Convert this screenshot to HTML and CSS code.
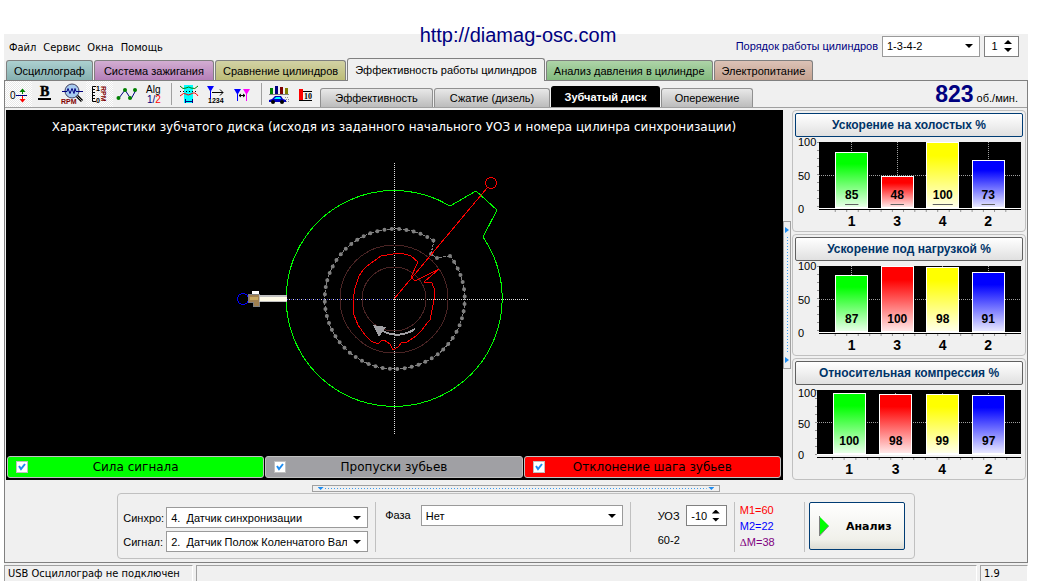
FILE: index.html
```html
<!DOCTYPE html>
<html lang="ru">
<head>
    <meta charset="UTF-8">
    <meta name="viewport" content="width=device-width, initial-scale=1.0">
    <title>Diamag</title>
    <link rel="stylesheet" href="styles.css">
</head>
<body>
    <div class="banner"><a href="#">http://diamag-osc.com</a></div>

    <div class="window">
        <header class="topbar">
            <nav class="menu">
                <a href="#">Файл</a>
                <a href="#">Сервис</a>
                <a href="#">Окна</a>
                <a href="#">Помощь</a>
            </nav>
            <div class="order">
                <label for="order">Порядок работы цилиндров</label>
                <select id="order" class="select order-select">
                    <option>1-3-4-2</option>
                </select>
                <div class="spinner">
                    <input type="text" value="1" aria-label="Цилиндр">
                    <div class="arrows">
                        <button type="button" class="up" aria-label="Больше"></button>
                        <button type="button" class="down" aria-label="Меньше"></button>
                    </div>
                </div>
            </div>
        </header>

        <div class="tabs">
            <button type="button" class="tab teal">Осциллограф</button>
            <button type="button" class="tab violet">Система зажигания</button>
            <button type="button" class="tab olive">Сравнение цилиндров</button>
            <button type="button" class="tab current">Эффективность работы цилиндров</button>
            <button type="button" class="tab green">Анализ давления в цилиндре</button>
            <button type="button" class="tab brown">Электропитание</button>
        </div>

        <div class="page">
            <div class="toolbar">
                <button type="button" class="tool pressed" aria-label="Ноль">
                    <svg viewBox="0 0 26 24">
                        <text x="5" y="17" font-size="10">0</text>
                        <path d="M11 13.500h11" stroke="#000080"/>
                        <path d="M17.500 12V9" stroke="#008000"/>
                        <path d="M14.500 10l3-3.500 3 3.500z" fill="#008000"/>
                        <path d="M17.500 14v3" stroke="#f00"/>
                        <path d="M14.500 17l3 3.500 3-3.500z" fill="#f00"/>
                    </svg>
                </button>
                <button type="button" class="tool" aria-label="Жирный">
                    <svg viewBox="0 0 26 24">
                        <text x="8" y="14" class="serif" font-size="14" stroke="#000" stroke-width=".500">B</text>
                        <path d="M6 17h13" stroke="#000" stroke-width="2"/>
                    </svg>
                </button>
                <button type="button" class="tool" aria-label="Обороты">
                    <svg viewBox="0 0 26 24">
                        <path d="M17 13l6 6" stroke="#000" stroke-width="3"/>
                        <path d="M18 14l5 5" stroke="#a0a0a0"/>
                        <circle cx="13" cy="9" r="7" fill="#a6caf0" stroke="#404060"/>
                        <path d="M3 9.500h5l1-3 2 5 2-5 2 5 1-5 1 3h7" fill="none" stroke="#000080"/>
                        <text x="2" y="22" class="bold" font-size="7" fill="#800000">RPM</text>
                    </svg>
                </button>
                <button type="button" class="tool pressed" aria-label="Шкала оборотов">
                    <svg viewBox="0 0 26 24">
                        <path d="M10 4.500H6.500v15H10M7 7.500h2M7 10.500h2M7 13.500h2M7 16.500h2" fill="none" stroke="#000"/>
                        <text x="10" y="9" class="bold" font-size="7">1</text>
                        <text x="10" y="21" class="bold" font-size="7">0</text>
                        <text transform="translate(15 4) rotate(90)" x="0" y="0" class="bold" font-size="7" fill="#800000">RPM</text>
                    </svg>
                </button>
                <button type="button" class="tool" aria-label="График">
                    <svg viewBox="0 0 26 24">
                        <path d="M6 16l6-8 6 9 5-9" fill="none" stroke="#000080"/>
                        <g fill="#008000">
                            <circle cx="5.500" cy="16" r="2"/><circle cx="12" cy="8" r="2"/>
                            <circle cx="17" cy="16" r="2"/><circle cx="22" cy="8" r="2"/>
                        </g>
                    </svg>
                </button>
                <button type="button" class="tool" aria-label="Алгоритм">
                    <svg viewBox="0 0 26 24">
                        <text x="6" y="11" font-size="10">Alg</text>
                        <text x="7" y="21" font-size="10" fill="#000080">1/<tspan fill="#f00">2</tspan></text>
                    </svg>
                </button>
                <span class="divider"></span>
                <button type="button" class="tool" aria-label="Область">
                    <svg viewBox="0 0 26 24">
                        <path d="M8 3h9v18H8z" fill="#0ff"/>
                        <path d="M4 4q3 4 6 2t5 0q4 2 7-2" fill="none" stroke="#008000"/>
                        <path d="M4 9.500h18" stroke="#000" stroke-dasharray="1 2"/>
                        <path d="M4 14q4-4 6-2t5 0q4-3 7 2" fill="none" stroke="#f00"/>
                        <path d="M9 19.500h8M9.500 17v4M16.500 17v4" stroke="#000080"/>
                    </svg>
                </button>
                <button type="button" class="tool" aria-label="Порядок">
                    <svg viewBox="0 0 26 24">
                        <path d="M4 4h7l-3 5v8H7V9z" fill="#00f"/>
                        <path d="M9 10.500h11M17 7.500l3 3-3 3" fill="none" stroke="#000"/>
                        <text x="5" y="21" class="bold" font-size="7">1234</text>
                    </svg>
                </button>
                <button type="button" class="tool" aria-label="Метки">
                    <svg viewBox="0 0 26 24">
                        <path d="M4 7h7L8 12v7H7v-7z" fill="#00f"/>
                        <path d="M13 7h7l-3 5v7h-1v-7z" fill="#f0f"/>
                        <path d="M9 13.500h6M11 12l-2 1.500 2 1.500M13 12l2 1.500-2 1.500" fill="none" stroke="#000"/>
                    </svg>
                </button>
                <span class="divider"></span>
                <button type="button" class="tool" aria-label="Автомобиль">
                    <svg viewBox="0 0 26 24">
                        <path d="M4 6h3v6H4z" fill="#008000"/>
                        <path d="M9 4h3v8H9z" fill="#000080"/>
                        <path d="M14 5h3v7h-3z" fill="#800000"/>
                        <path d="M19 6h3v6h-3z" fill="#808000"/>
                        <path d="M3 12.500h20" stroke="#808080"/>
                        <path d="M3 18l3-1 3-3h6l2 3 3 1v2H3z" fill="#0000c0"/>
                        <path d="M8 17l2-2h4l1 2z" fill="#0ff"/>
                        <circle cx="7" cy="20" r="2"/><circle cx="16" cy="20" r="2"/>
                        <path d="M19 15.500h4M20 17.500h3M20 19.500h3" stroke="#909090" stroke-dasharray="1 1"/>
                    </svg>
                </button>
                <button type="button" class="tool" aria-label="Десять">
                    <svg viewBox="0 0 26 24">
                        <path d="M6 7h4v11H6z" fill="#f00"/>
                        <path d="M6 18.500h13M10 9.500h9" stroke="#000"/>
                        <text x="11" y="17" class="serif" font-size="8">10</text>
                    </svg>
                </button>

                <div class="subtabs">
                    <button type="button" class="subtab efficiency">Эффективность</button>
                    <button type="button" class="subtab diesel">Сжатие (дизель)</button>
                    <button type="button" class="subtab gear current">Зубчатый диск</button>
                    <button type="button" class="subtab advance">Опережение</button>
                </div>
                <div class="rpm"><b>823</b> об./мин.</div>
            </div>

            <main class="work">
                <section class="scope">
                    <h1>Характеристики зубчатого диска (исходя из заданного начального УОЗ и номера цилинра синхронизации)</h1>
                    <svg class="disc" viewBox="-165 -150 330 300" fill="none">
                        <!-- axes -->
                        <path d="M0-136V136M-107 0H135" class="axis"/>
                        <path d="M-107 0H0" stroke="#4040d0" stroke-dasharray="1 3"/>
                        <circle r="54" stroke="#4a2424"/>
                        <circle r="32" stroke="#4a2424"/>
                        <!-- signal strength -->
                        <path d="M89-62A108 108 0 1 1 56-93L82-108 103-89z" stroke="#0f0"/>
                        <!-- teeth, 60-2 -->
                        <path d="M56-43A70 70 0 1 1 40-58L37-45 43-41z" stroke="#808080" stroke-dasharray="3 1"/>
                        <path d="M56-43A70 70 0 1 1 40-58" pathLength="57.100" class="teeth"/>
                        <path d="M37-45h0M43-41h0" class="teeth-lost"/>
                        <!-- pitch deviation -->
                        <polygon stroke="#f00" points="-1,-45 7,-46 17,-43 24,-37 17,-22 21,-18 45,-30 30,-17 38,-16 41,-8 40,1 38,11 36,21 33,24 28,31 22,37 13,43 8,43 4,48 -1,51 -4,45 -10,41 -13,42 -16,45 -23,42 -29,36 -36,26 -40,16 -41,2 -39,-11 -35,-23 -31,-29 -27,-33 -20,-38 -13,-43"/>
                        <path d="M0 0L93-111" stroke="#f00"/>
                        <circle cx="97" cy="-116" r="5.500" stroke="#f00"/>
                        <!-- rotation arrow -->
                        <path d="M21 30Q4 41-13 31" stroke="#a0a0a4" stroke-width="2"/>
                        <path d="M-21 26l13 2-3 4-4 6z" fill="#a0a0a4"/>
                        <!-- sensor -->
                        <circle cx="-151" r="5.500" stroke="#00f"/>
                        <path d="M-142-8h7v4h-7z" fill="#fff"/>
                        <path d="M-146-5h11V7h-6V3h-5z" fill="#a08050" stroke="#808080"/>
                        <path d="M-144-2h8v3h-8z" fill="#c8a860"/>
                        <path d="M-135-4h28v7h-28z" fill="#c0c0c0"/>
                        <path d="M-134-2h27v4h-27z" fill="#fffbe8"/>
                    </svg>
                    <div class="legend">
                        <label class="signal"><input type="checkbox" checked><span>Сила сигнала</span></label>
                        <label class="missing"><input type="checkbox" checked><span>Пропуски зубьев</span></label>
                        <label class="pitch"><input type="checkbox" checked><span>Отклонение шага зубьев</span></label>
                    </div>
                </section>

                <div class="splitter vertical"></div>

                <aside class="charts">
                    <section class="chart">
                        <button type="button" class="focused">Ускорение на холостых %</button>
                        <div class="plot">
                            <div class="scale"><span>100</span><span>50</span><span>0</span></div>
                            <div class="bars">
                                <div class="col"><div class="bar lime marked" style="height: 85%">85</div></div>
                                <div class="col"><div class="bar red marked" style="height: 48%">48</div></div>
                                <div class="col"><div class="bar yellow marked" style="height: 100%">100</div></div>
                                <div class="col"><div class="bar blue marked" style="height: 73%">73</div></div>
                            </div>
                        </div>
                        <div class="numbers"><span>1</span><span>3</span><span>4</span><span>2</span></div>
                    </section>
                    <section class="chart">
                        <button type="button">Ускорение под нагрузкой %</button>
                        <div class="plot">
                            <div class="scale"><span>100</span><span>50</span><span>0</span></div>
                            <div class="bars">
                                <div class="col"><div class="bar lime" style="height: 87%">87</div></div>
                                <div class="col"><div class="bar red" style="height: 100%">100</div></div>
                                <div class="col"><div class="bar yellow" style="height: 98%">98</div></div>
                                <div class="col"><div class="bar blue" style="height: 91%">91</div></div>
                            </div>
                        </div>
                        <div class="numbers"><span>1</span><span>3</span><span>4</span><span>2</span></div>
                    </section>
                    <section class="chart compression">
                        <button type="button">Относительная компрессия %</button>
                        <div class="plot">
                            <div class="scale"><span>100</span><span>50</span><span>0</span></div>
                            <div class="bars">
                                <div class="col"><div class="bar lime" style="height: 100%">100</div></div>
                                <div class="col"><div class="bar red" style="height: 98%">98</div></div>
                                <div class="col"><div class="bar yellow" style="height: 99%">99</div></div>
                                <div class="col"><div class="bar blue" style="height: 97%">97</div></div>
                            </div>
                        </div>
                        <div class="numbers"><span>1</span><span>3</span><span>4</span><span>2</span></div>
                    </section>
                </aside>
            </main>

            <div class="splitter horizontal"></div>

            <form class="settings">
                <div class="channels">
                    <label for="sync">Синхро:</label>
                    <select id="sync" class="select">
                        <option>4. &nbsp;Датчик синхронизации</option>
                    </select>
                    <label for="signal">Сигнал:</label>
                    <select id="signal" class="select">
                        <option>2. &nbsp;Датчик Полож Коленчатого Вала</option>
                    </select>
                </div>
                <div class="phase">
                    <label for="phase">Фаза</label>
                    <select id="phase" class="select">
                        <option>Нет</option>
                    </select>
                </div>
                <div class="advance-angle">
                    <label for="uoz">УОЗ</label>
                    <div class="spinner">
                        <input type="text" id="uoz" value="-10">
                        <div class="arrows">
                            <button type="button" class="up" aria-label="Больше"></button>
                            <button type="button" class="down" aria-label="Меньше"></button>
                        </div>
                    </div>
                    <span>60-2</span>
                </div>
                <div class="marks">
                    <span class="m1">M1=60</span>
                    <span class="m2">M2=22</span>
                    <span class="dm"><i>Δ</i>M=38</span>
                </div>
                <button type="button" class="analyze">
                    <svg viewBox="0 0 10 20"><path d="M0 0l10 10L0 20z" fill="#0f0"/><path d="M.500 0v20l9-10" fill="none" stroke="#808080"/></svg>
                    <span>Анализ</span>
                </button>
            </form>
        </div>

        <footer class="status">
            <span class="device">USB Осциллограф не подключен</span>
            <span class="message"></span>
            <span class="version">1.9</span>
        </footer>
    </div>
</body>
</html>
```
FILE: styles.css
```css
* {
    box-sizing: border-box;
}

body {
    margin: 0;
    background: #fff;
    color: #000;
    font-family: "Liberation Sans", Arial, sans-serif;
    font-size: 11px;
}

button,
input,
select {
    margin: 0;
    padding: 0;
    font: inherit;
    color: inherit;
}

a {
    color: inherit;
    text-decoration: none;
}

.banner {
    position: relative;
    z-index: 1;
    height: 34px;
    padding: 23px 4px 0 0;
    text-align: center;
    font-size: 20px;
    line-height: 24px;
    color: #000080;
}

.window {
    margin: 0 12px 0 4px;
    background: #f0f0f0;
}

/* menu and cylinder order */
.topbar {
    display: flex;
    justify-content: space-between;
    height: 24px;
    padding-right: 9px;
}

.menu {
    display: flex;
    gap: 7px;
    padding: 5px 5px 0;
    font-family: "DejaVu Sans Condensed", Tahoma, sans-serif;
    line-height: 17px;
}

.order {
    display: flex;
    align-items: center;
    gap: 4px;
    color: #000080;
}

.select {
    appearance: none;
    height: 21px;
    padding: 0 20px 0 4px;
    border: 1px solid #9a9a9a;
    border-radius: 0;
    background: #fff url("data:image/svg+xml,%3Csvg xmlns='http://www.w3.org/2000/svg' width='8' height='4'%3E%3Cpath d='M0 0h8L4 4z'/%3E%3C/svg%3E") no-repeat right 6px center;
    color: #000;
    text-overflow: clip;
}

.order-select {
    width: 98px;
}

.spinner {
    display: flex;
    height: 21px;
    border: 1px solid #808080;
    background: #fff;
    color: #000;
}

.order .spinner {
    width: 35px;
}

.spinner input {
    flex: 1;
    min-width: 0;
    border: 0;
    background: none;
    text-align: center;
}

.arrows {
    display: flex;
    flex-direction: column;
    justify-content: center;
    gap: 4px;
    padding-right: 6px;
}

.arrows button {
    width: 8px;
    height: 4px;
    border: 0;
    background: #000;
}

.arrows .up {
    clip-path: polygon(50% 0, 100% 100%, 0 100%);
}

.arrows .down {
    clip-path: polygon(0 0, 100% 0, 50% 100%);
}

/* main tabs */
.tabs {
    display: flex;
    align-items: flex-end;
    gap: 1px;
    height: 22px;
    padding-left: 2px;
}

.tab {
    height: 20px;
    padding: 0 7px;
    border: 1px solid #808080;
    border-bottom: 0;
    border-radius: 3px 3px 0 0;
    white-space: nowrap;
}

.teal {
    background: linear-gradient(#acd0d0, #86b0b0);
}

.violet {
    padding: 0 9px;
    background: linear-gradient(#d2add2, #b57fb8);
}

.olive {
    background: linear-gradient(#d2d2a4, #bcbc78);
}

.green {
    background: linear-gradient(#aed4a8, #82ba7e);
}

.brown {
    background: linear-gradient(#dcc2b6, #c4a290);
}

.tab.current {
    height: 23px;
    margin-bottom: -1px;
    padding-bottom: 1px;
    background: #f0f0f0;
    position: relative;
}

.page {
    border: 1px solid #808080;
    padding-bottom: 3px;
}

/* toolbar */
.toolbar {
    display: flex;
    height: 27px;
    border-bottom: 1px solid #a0a0a0;
}

.tool {
    width: 27px;
    height: 26px;
    border: 0;
    background: none;
}

.tool.pressed {
    background: repeating-conic-gradient(#fff 0 25%, #e8e8e8 0 50%) 0 0 / 2px 2px;
}

.tool svg {
    display: block;
    width: 26px;
    height: 24px;
    font-family: "Liberation Sans", Arial, sans-serif;
}

.tool .serif {
    font-family: "Liberation Serif", serif;
    font-weight: bold;
}

.tool .bold {
    font-weight: bold;
}

.divider {
    width: 1px;
    margin: 2px 4px;
    background: #a0a0a0;
}

.subtabs {
    display: flex;
    align-items: flex-end;
    gap: 1px;
}

.subtab {
    height: 19px;
    border: 1px solid #909090;
    border-bottom: 0;
    border-radius: 3px 3px 0 0;
    background: linear-gradient(#e8e8e8, #bcbcbc);
}

.subtab.current {
    height: 21px;
    border-color: #000;
    background: #000;
    color: #fff;
    font-weight: bold;
}

.efficiency {
    width: 113px;
}

.diesel {
    width: 116px;
}

.gear {
    width: 109px;
}

.advance {
    width: 92px;
}

.rpm {
    margin-left: auto;
    padding-right: 9px;
    line-height: 26px;
}

.rpm b {
    font-size: 23px;
    color: #000080;
}

/* disc view */
.work {
    display: grid;
    grid-template-columns: 1fr 8px 236px;
    padding: 2px 0 0 1px;
}

.scope {
    display: flex;
    flex-direction: column;
    align-items: center;
    min-width: 0;
    padding: 0 2px 2px 1px;
    background: #000;
}

.scope h1 {
    margin: 0;
    padding-top: 4px;
    height: 39px;
    font-family: "DejaVu Sans", Verdana, sans-serif;
    font-size: 12px;
    font-weight: normal;
    line-height: 26px;
    color: #fff;
}

.disc {
    width: 330px;
    height: 300px;
    shape-rendering: crispEdges;
}

.axis {
    stroke: #e0e0e0;
    stroke-dasharray: 1 1;
}

.teeth,
.teeth-lost {
    stroke: #808080;
    stroke-width: 4;
    stroke-linecap: round;
    shape-rendering: auto;
}

.teeth {
    stroke-dasharray: 0 1;
}

.legend {
    display: grid;
    grid-template-columns: repeat(3, 1fr);
    gap: 1px;
    width: 100%;
    margin-top: auto;
}

.legend label {
    display: flex;
    align-items: center;
    height: 22px;
    padding: 0 20px 0 8px;
    border: 1px solid #c0c0c0;
    border-radius: 3px;
    font-family: "DejaVu Sans", Verdana, sans-serif;
    font-size: 12px;
}

.legend span {
    flex: 1;
    text-align: center;
}

.legend input {
    appearance: none;
    width: 12px;
    height: 12px;
    border: 1px solid #c0c0c0;
    background: #fff;
}

.legend input:checked {
    background: #fff url("data:image/svg+xml,%3Csvg xmlns='http://www.w3.org/2000/svg' width='8' height='8'%3E%3Cpath d='M1 3l2 3 4-5' fill='none' stroke='%231e8cf0' stroke-width='2'/%3E%3C/svg%3E") no-repeat center;
}

.signal {
    background: #0f0;
}

.missing {
    background: #a0a0a4;
}

.pitch {
    background: #f00;
}

/* splitters: dotted grip with an arrow at each end */
.splitter {
    display: flex;
    align-items: center;
    justify-content: space-between;
    border: 1px solid #a0a0a0;
}

.splitter::before,
.splitter::after {
    content: "";
    background: #1e8cf0;
}

.splitter.vertical {
    flex-direction: column;
    align-self: center;
    height: 148px;
    padding: 5px 0;
    background: repeating-linear-gradient(#3c9cf0 0 1px, transparent 1px 3px) center / 1px 80% no-repeat;
}

.vertical::before,
.vertical::after {
    width: 4px;
    height: 6px;
    clip-path: polygon(0 0, 100% 50%, 0 100%);
}

.splitter.horizontal {
    width: 40%;
    height: 7px;
    margin: 5px auto 1px;
    padding: 0 5px;
    background: repeating-linear-gradient(90deg, #3c9cf0 0 1px, transparent 1px 3px) center / 94% 1px no-repeat;
}

.horizontal::before,
.horizontal::after {
    width: 6px;
    height: 3px;
    clip-path: polygon(0 0, 100% 0, 50% 100%);
}

/* charts */
.charts {
    display: grid;
    gap: 2px;
    padding: 0 1px;
}

.chart {
    padding: 2px;
    border: 1px solid #c0c0c0;
    border-radius: 4px;
}

.chart button {
    display: block;
    width: 100%;
    height: 24px;
    border: 1px solid #606060;
    border-radius: 2px;
    background: linear-gradient(#fff, #e0e0e0);
    color: #003468;
    font-size: 12px;
    font-weight: bold;
}

.chart .focused {
    border-color: #003c74;
}

.plot {
    display: flex;
    height: 67px;
    margin: 5px 2px 0 0;
}

.scale {
    display: flex;
    flex-direction: column;
    justify-content: space-between;
    width: 24px;
    padding-left: 3px;
    background: repeating-linear-gradient(#909090 0 1px, transparent 1px 8px) right / 2px 100% no-repeat;
    line-height: 0;
}

.bars {
    flex: 1;
    display: flex;
    padding: 0 10px;
    border-bottom: 1px solid #fff;
    background: #000 repeating-linear-gradient(90deg, #a0a0a0 0 1px, transparent 1px 2px) 0 50% / 100% 1px no-repeat;
}

.col {
    flex: 1;
    display: flex;
    align-items: flex-end;
    justify-content: center;
    background: repeating-linear-gradient(#a0a0a0 0 1px, transparent 1px 2px) 50% 0 / 1px 100% no-repeat;
}

.bar {
    display: flex;
    align-items: flex-end;
    justify-content: center;
    width: 33px;
    padding-bottom: 3px;
    border: 1px solid #fff;
    font-size: 12px;
    font-weight: bold;
    line-height: 17px;
}

.marked {
    text-decoration: underline;
    text-decoration-color: #606060;
    text-decoration-thickness: 1px;
    text-underline-offset: 5px;
}

.lime {
    background: linear-gradient(#0f0 20%, #e8ffe8);
}

.red {
    background: linear-gradient(#f00 20%, #ffe8e8);
}

.yellow {
    background: linear-gradient(#ff0 20%, #ffffe8);
}

.blue {
    background: linear-gradient(#00f 20%, #e8e8ff);
}

.numbers {
    display: flex;
    margin: 0 2px 0 24px;
    padding: 0 10px;
    border-top: 1px solid #000;
}

.numbers span {
    flex: 1;
    padding-top: 4px;
    background: linear-gradient(90deg, transparent 50%, #909090 50% calc(50% + 1px), transparent 0) 0 0 / 25% 2px repeat-x;
    text-align: center;
    font-size: 14px;
    font-weight: bold;
    line-height: 15px;
}

.compression .plot {
    height: 65px;
    margin-bottom: 2px;
}

.compression .scale {
    width: 22px;
    padding-top: 3px;
}

.compression .bars {
    padding: 3px 9px 0;
}

.compression .numbers {
    margin-left: 22px;
    padding: 0 9px;
}

/* settings panel */
.settings {
    display: flex;
    width: fit-content;
    margin: 0 auto;
    padding: 8px 9px 6px 8px;
    border: 1px solid #c0c0c0;
    border-radius: 4px;
}

.channels {
    display: grid;
    grid-template-columns: 40px 202px;
    gap: 3px;
    align-items: center;
    padding: 5px 7px 0 0;
    margin-left: -3px;
    border-right: 1px solid #c0c0c0;
}

.channels .select,
.phase .select {
    width: 202px;
}

.phase {
    display: flex;
    align-items: flex-start;
    gap: 10px;
    padding: 3px 7px 0 9px;
    border-right: 1px solid #c0c0c0;
}

.phase label {
    line-height: 21px;
}

.advance-angle {
    display: grid;
    grid-template-columns: auto 41px;
    gap: 4px 6px;
    align-content: start;
    align-items: center;
    padding: 3px 7px 0 27px;
    border-right: 1px solid #c0c0c0;
}

.advance-angle span {
    line-height: 21px;
}

.marks {
    display: flex;
    flex-direction: column;
    width: 70px;
    padding-left: 5px;
    border-right: 1px solid #c0c0c0;
    line-height: 16px;
}

.m1 {
    color: #f00;
}

.m2 {
    color: #00f;
}

.dm {
    color: #800080;
}

.dm i {
    font-family: "Liberation Serif", serif;
    font-style: normal;
}

.analyze {
    display: flex;
    align-items: center;
    width: 96px;
    height: 48px;
    margin-left: 4px;
    padding: 0 9px;
    border: 1px solid #003c74;
    border-radius: 2px;
    background: linear-gradient(#fff, #f0f0ea 80%, #dcdcd4);
    font-family: "DejaVu Sans", Verdana, sans-serif;
    font-weight: bold;
}

.analyze svg {
    width: 10px;
    height: 20px;
}

.analyze span {
    flex: 1;
    padding-left: 14px;
}

/* status bar */
.status {
    display: flex;
    gap: 3px;
    padding-top: 2px;
    font-family: "DejaVu Sans Condensed", Tahoma, sans-serif;
    line-height: 15px;
}

.status span {
    height: 16px;
    padding-left: 3px;
    border: 1px solid #a0a0a0;
    border-right-color: #fff;
    border-bottom: 0;
}

.device {
    width: 189px;
}

.message {
    flex: 1;
}

.version {
    width: 48px;
}
```
